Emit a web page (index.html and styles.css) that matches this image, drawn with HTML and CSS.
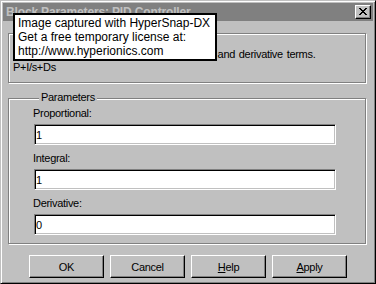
FILE: index.html
```html
<!DOCTYPE html>
<html lang="en">
<head>
  <meta charset="UTF-8" />
  <title>Block Parameters: PID Controller</title>
  <link rel="stylesheet" href="styles.css">
</head>
<body>
  <div class="window">
    <div class="titlebar">
      <span class="title">Block Parameters: PID Controller</span>
      <button class="close" type="button">
        <svg width="8" height="7" viewBox="0 0 8 7" shape-rendering="crispEdges">
          <path d="M0 0h2v1H0zM6 0h2v1H6zM1 1h2v1H1zM5 1h2v1H5zM2 2h4v1H2zM3 3h2v1H3zM2 4h4v1H2zM1 5h2v1H1zM5 5h2v1H5zM0 6h2v1H0zM6 6h2v1H6z" fill="#000"/>
        </svg>
      </button>
    </div>

    <div class="dialog">
      <!-- legend of this box sits under the tooltip, so it is left out -->
      <div class="group group-info">
        <div class="desc">Enter expressions for proportional, integral, and derivative terms.<br>P+I/s+Ds</div>
      </div>

      <div class="group group-params">
        <span class="group-title">Parameters</span>
        <div class="field">
          <label for="prop">Proportional:</label>
          <input type="text" id="prop" value="1" />
        </div>
        <div class="field">
          <label for="integ">Integral:</label>
          <input type="text" id="integ" value="1" />
        </div>
        <div class="field">
          <label for="deriv">Derivative:</label>
          <input type="text" id="deriv" value="0" />
        </div>
      </div>

      <div class="buttons">
        <button type="button" class="btn">OK</button>
        <button type="button" class="btn">Cancel</button>
        <button type="button" class="btn"><u>H</u>elp</button>
        <button type="button" class="btn"><u>A</u>pply</button>
      </div>
    </div>

    <div class="tooltip">Image captured with HyperSnap-DX<br>Get a free temporary license at:<br>http://www.hyperionics.com</div>
  </div>
</body>
</html>
```

FILE: styles.css
```css
html, body {
  margin: 0;
  padding: 0;
  background: #c0c0c0;
}

body {
  font-family: "Liberation Sans", Arial, sans-serif;
  font-size: 11px;
  color: #000;
}

.window {
  position: relative;
  width: 376px;
  height: 284px;
  box-sizing: border-box;
  padding: 2px;
  background: #c0c0c0;
  border: 1px solid;
  border-color: #c0c0c0 #000 #000 #c0c0c0;
  box-shadow: inset 1px 1px 0 #fff, inset -1px -1px 0 #808080;
}

.titlebar {
  height: 18px;
  background: #808080;
  display: flex;
  align-items: center;
  justify-content: space-between;
  padding: 0 2px 0 3px;
}

.title {
  font-weight: bold;
  font-size: 12px;
  letter-spacing: -0.15px;
  color: #c0c0c0;
  white-space: nowrap;
}

.close {
  width: 16px;
  height: 14px;
  box-sizing: border-box;
  padding: 2px 0 0 0;
  margin: 0;
  display: flex;
  justify-content: center;
  align-items: flex-start;
  background: #c0c0c0;
  border: 1px solid;
  border-color: #fff #000 #000 #fff;
  box-shadow: inset -1px -1px 0 #808080;
}

.close svg {
  display: block;
}

.dialog {
  padding: 12px 7px 0 5px;
  letter-spacing: -0.3px;
}

.group {
  display: flex;
  flex-direction: column;
  border: 1px solid #808080;
  box-shadow: 1px 1px 0 #fff, inset 1px 1px 0 #fff;
}

.group-title {
  align-self: flex-start;
  margin: -8px 0 0 6px;
  padding: 0 2px;
  line-height: 13px;
  background: #c0c0c0;
  white-space: nowrap;
}

.group-info {
  padding: 14px 0 8px 0;
}

.desc {
  padding-left: 4px;
  line-height: 13px;
  word-spacing: 1px;
  white-space: nowrap;
}

.group-params {
  margin-top: 15px;
  padding: 0 0 8px 24px;
}

.field {
  display: flex;
  flex-direction: column;
  margin-top: 7px;
}

.field:first-of-type {
  margin-top: 3px;
}

.field label {
  line-height: 13px;
  margin-bottom: 4px;
}

.field input {
  width: 302px;
  height: 21px;
  box-sizing: border-box;
  margin: 0 0 0 1px;
  padding: 0 0 0 1px;
  font-family: "Liberation Sans", Arial, sans-serif;
  font-size: 11px;
  background: #fff;
  color: #000;
  border: 1px solid;
  border-color: #808080 #fff #fff #808080;
  box-shadow: inset 1px 1px 0 #000, inset -1px -1px 0 #c0c0c0;
  outline: none;
}

.buttons {
  display: flex;
  justify-content: center;
  gap: 6px;
  margin-top: 11px;
  padding-left: 2px;
}

.btn {
  width: 75px;
  height: 23px;
  box-sizing: border-box;
  margin: 0;
  padding: 0;
  font-family: "Liberation Sans", Arial, sans-serif;
  font-size: 11px;
  letter-spacing: -0.3px;
  color: #000;
  background: #c0c0c0;
  border: 1px solid;
  border-color: #fff #000 #000 #fff;
  box-shadow: inset -1px -1px 0 #808080;
}

.tooltip {
  position: absolute;
  left: 12px;
  top: 12px;
  width: 204px;
  box-sizing: border-box;
  padding: 1px 3px;
  background: #fff;
  border: 2px solid #000;
  font-size: 12px;
  line-height: 14px;
  white-space: nowrap;
}
```
